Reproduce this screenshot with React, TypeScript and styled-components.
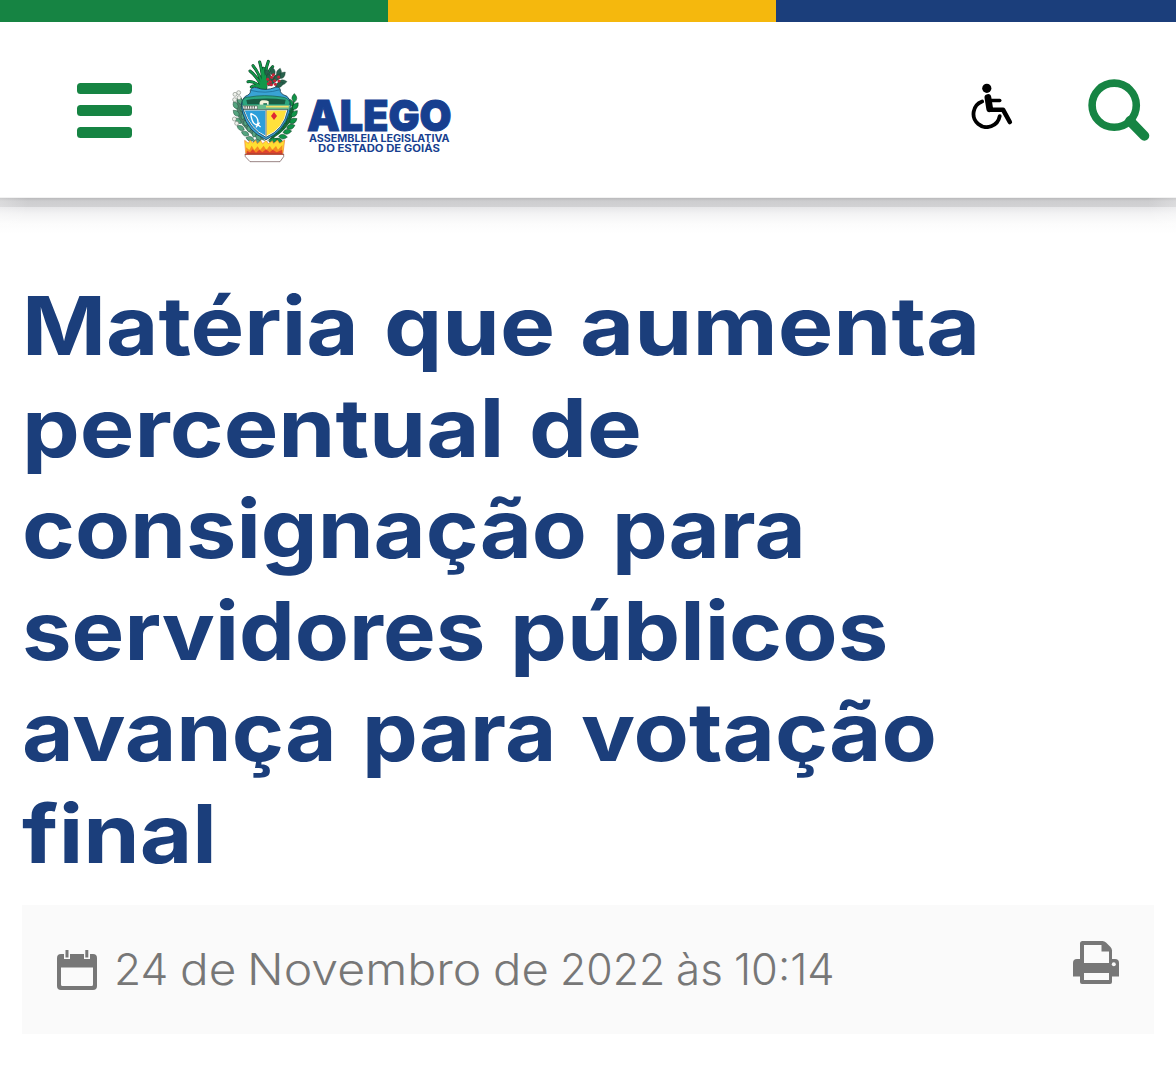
import React, { useLayoutEffect, useRef, useState } from "react";
import styled, { createGlobalStyle } from "styled-components";

const GlobalStyle = createGlobalStyle`
  * { box-sizing: border-box; }
  html, body { margin: 0; background: #fff; }
  body { font-family: Inter, "Liberation Sans", sans-serif; min-height: 1078px; overflow: hidden; }
`;

const Page = styled.div`
  width: 1176px;
  height: 1078px;
  background: #fff;
  overflow: hidden;
`;
const FlagStrip = styled.div`
  display: grid;
  grid-template-columns: 388px 388px 1fr;
  height: 22px;
`;
const FlagBand = styled.span<{ $color: string }>`
  background: ${(p) => p.$color};
`;
const Header = styled.header`
  display: flex;
  align-items: flex-start;
  height: 176px;
  padding: 34px 26px 0 77px;
  background: #fff;
  border-bottom: 1px solid #f2f2f2;
`;
const HeaderShadow = styled.div`
  height: 46px;
  background:
    linear-gradient(90deg, rgba(255, 255, 255, 0.25), rgba(255, 255, 255, 0) 28px calc(100% - 28px), rgba(255, 255, 255, 0.25)),
    linear-gradient(#b9b9bb 0, #cdcdcf 3px, #d2d2d4 9px, #e6e6e8 9px, #f3f3f4 16px, #fcfcfc 26px, #fff 36px);
`;
const IconButton = styled.button<{ $top: number; $left?: number }>`
  display: block;
  border: 0;
  padding: 0;
  background: none;
  margin: ${(p) => p.$top}px 0 0 ${(p) => p.$left ?? 0}px;
  svg { display: block; }
`;
const MenuBars = styled.span`
  display: grid;
  gap: 11px;
  width: 55px;
`;
const MenuBar = styled.span`
  height: 11px;
  border-radius: 3.5px;
  background: #168443;
`;
const Brand = styled.a`
  display: flex;
  margin-left: 88px;
  color: #173f8f;
  svg { display: block; flex: none; }
`;
const BrandText = styled.div`
  padding-top: 41px;
  margin-left: -3px;
`;
const BrandName = styled.div`
  font-size: 43px;
  line-height: 37px;
  font-weight: 900;
  height: 37px;
  -webkit-text-stroke: 1px #173f8f;
`;
const BrandLine = styled.div<{ $indent: number }>`
  font-size: 9.8px;
  font-weight: 700;
  line-height: 10px;
  height: 10px;
  padding-left: ${(p) => p.$indent}px;
`;
const Spacer = styled.span`
  flex: 1;
`;
const Article = styled.main`
  padding: 31px 22px 0;
`;
const Title = styled.h1`
  margin: 0;
  font-size: 81.5px;
  font-weight: 700;
  line-height: 101.5px;
  color: #1b3e7b;
`;
const TitleLine = styled.span`
  display: flex;
  gap: 25px;
  height: 101.5px;
`;
const Meta = styled.div`
  display: flex;
  height: 129px;
  margin-top: 21px;
  padding: 0 35px;
  background: #fafafa;
  color: #777;
`;
const DateText = styled.time`
  display: flex;
  gap: 11px;
  font-size: 43px;
  font-weight: 300;
  line-height: 52px;
  margin: 38px 0 0 17px;
`;
const WordBox = styled.span`
  display: block;
  flex: none;
  white-space: nowrap;
`;
const WordGlyphs = styled.span`
  display: inline-block;
  transform-origin: 0 50%;
`;

function Fitted({ width, children }: { width: number; children: string }) {
  const ref = useRef<HTMLSpanElement>(null);
  const [scale, setScale] = useState(1);
  useLayoutEffect(() => {
    if (ref.current) setScale(width / ref.current.offsetWidth);
  }, [width]);
  return (
    <WordBox style={{ width }}>
      <WordGlyphs ref={ref} style={{ transform: `scaleX(${scale})` }}>{children}</WordGlyphs>
    </WordBox>
  );
}

const WheelchairIcon = () => (
  <svg width="44" height="46" viewBox="970.5 83.3 44 46" fill="none" stroke="#000" strokeLinecap="round" strokeLinejoin="round">
    <circle cx="987.3" cy="88.6" r="4.6" fill="#000" stroke="none" />
    <path d="M982.6 101.8A13.2 13.2 0 1 0 1000.2 116.5" strokeWidth="3.8" />
    <path d="M988.4 97.8L990.2 109" strokeWidth="6.8" />
    <path d="M990 100.8L1000.3 100.8" strokeWidth="3.4" />
    <path d="M990.5 110L1003.5 110L1010.3 122.3" strokeWidth="4.6" />
  </svg>
);
const SearchIcon = () => (
  <svg width="63" height="63" viewBox="1087 78 63 63" fill="none" stroke="#168443">
    <circle cx="1114.2" cy="105.2" r="22.1" strokeWidth="7.6" />
    <path d="M1130 121L1144.4 135.8" strokeWidth="9.8" strokeLinecap="round" />
  </svg>
);
const CalendarIcon = () => (
  <svg width="40" height="41" viewBox="57 949 40 41">
    <path fill="#777" fillRule="evenodd" d="M61 954h32a4 4 0 0 1 4 4v28a4 4 0 0 1-4 4H61a4 4 0 0 1-4-4v-28a4 4 0 0 1 4-4zm0 13.5v17a1.5 1.5 0 0 0 1.5 1.5h29a1.5 1.5 0 0 0 1.5-1.5v-17z" />
    <path fill="#fafafa" d="M64 949h6v10h-6zM84 949h6v10h-6z" />
    <path fill="#777" d="M65.5 950h3v7.5h-3zM85.3 950h3v7.5h-3z" />
  </svg>
);
const PrintIcon = () => (
  <svg width="46" height="44" viewBox="1073 941 46 44">
    <path fill="#777" d="M1077 959h38a4 4 0 0 1 4 4v13.5h-46V963a4 4 0 0 1 4-4z" />
    <path fill="#777" d="M1083 941h19.5q2 0 3.5 1.500l4.500 4.500q1.500 1.500 1.500 3.500V982a2 2 0 0 1-2 2h-28a2 2 0 0 1-2-2v-38.500a2.500 2.500 0 0 1 2.500-2.500z" />
    <path fill="#fafafa" d="M1084 945h17.500v6.500h7.500V963h-25zM1084 973h25v7h-25z" />
    <circle cx="1113.8" cy="964.3" r="2" fill="#fafafa" />
  </svg>
);

const leaf = (x: number, y: number, a: number, s = 1) => (
  <path key={`${x}-${y}`} transform={`translate(${x} ${y}) rotate(${a}) scale(${s})`} d="M0 2Q-14 -9 0 -23Q14 -9 0 2Z" />
);

const Emblem = () => (
  <svg width="90" height="110" viewBox="0 18 270 330">
    <g fill="none" stroke="#123f25" strokeLinecap="round" strokeWidth="9">
      <path d="M131 118Q127 62 119 36M131 118Q120 72 99 47M131 118Q110 78 90 63M130 118Q105 92 84 95M135 116Q134 62 145 34M137 116Q140 65 158 50M133 118Q128 80 131 55M124 116Q108 102 94 111" />
    </g>
    <g fill="none" stroke="#12984a" strokeLinecap="round" strokeWidth="6">
      <path d="M131 118Q127 62 119 36M131 118Q120 72 99 47M131 118Q110 78 90 63M130 118Q105 92 84 95M135 116Q134 62 145 34M137 116Q140 65 158 50M133 118Q128 80 131 55M124 116Q108 102 94 111" />
    </g>
    <g fill="#28614c" stroke="#143d2c">
      {[[150, 80, -35], [160, 76, -10], [174, 79, 15], [178, 84, 45], [176, 99, 80], [160, 98, 20], [146, 106, 40], [168, 110, 60], [150, 95, -15], [164, 90, 45]].map(([x, y, a]) => leaf(x, y, a, 1.1))}
    </g>
    <g fill="#c92236">
      {[[143, 88], [151, 95], [155, 82], [164, 92], [176, 81], [154, 104], [145, 101], [166, 103], [177, 93], [160, 74]].map(([x, y]) => <circle key={`${x}-${y}`} cx={x} cy={y} r="4.6" />)}
    </g>
    <path d="M52 142Q38 200 83 243Q105 264 137 274Q102 232 73 199Q64 170 66 143Z" fill="#51836c" />
    <g fill="#55a47f" stroke="#245540" strokeWidth="1.5">
      {[[63, 162, -20], [52, 175, -30], [64, 184, 20], [56, 197, -45], [67, 207, 20], [62, 219, -50], [75, 226, 20], [71, 239, -60], [86, 244, 10], [85, 255, -65], [101, 260, 15], [100, 269, -75], [121, 271, -35], [121, 276, -85]].map(([x, y, a]) => leaf(x, y, a))}
    </g>
    <g fill="#eef1eb" stroke="#687069" strokeWidth="1.5">
      <circle cx="56" cy="128" r="6" /><circle cx="45" cy="133" r="6" /><circle cx="57" cy="143" r="6" /><circle cx="44" cy="149" r="6" /><circle cx="43" cy="207" r="6" /><circle cx="50" cy="220" r="6" />
    </g>
    <path d="M222 149Q232 232 139 275Q194 230 207 190Z" fill="#176b37" />
    <g fill="#0f9447" stroke="#123e25" strokeWidth="1.5">
      {[[223, 155, 0], [217, 166, -35], [219, 177, 40], [211, 185, -40], [215, 199, 45], [207, 203, -40], [210, 218, 60], [198, 219, -45], [202, 234, 70], [188, 234, -45], [191, 247, 80], [173, 249, -45], [178, 259, 95], [160, 260, -40], [165, 269, 105], [149, 274, 75]].map(([x, y, a]) => leaf(x, y, a, 1.05))}
    </g>
    <path d="M91 121Q96 110 110 113Q137 124 166 112Q178 109 181 119Q178 131 201 139Q217 155 208 188Q192 244 138 269Q83 245 68 190Q58 153 76 139Q94 132 91 121Z" fill="#39a3d5" stroke="#173b4c" strokeWidth="2.5" />
    <path d="M92 121Q136 133 180 119" fill="none" stroke="#17628b" strokeWidth="2" />
    <path d="M67 153Q72 140 89 141Q130 133 185 141Q205 143 209 157L207 178H70Z" fill="#2ca780" stroke="#185b43" strokeWidth="2" />
    <path d="M79 150Q136 141 197 149L194 163H82Z" fill="#195c43" />
    <path d="M119 164Q117 153 126 151Q139 149 146 154V164H141V160H130V164Z" fill="#f5f4dc" />
    <path d="M67 165H210L207 180H72Z" fill="#66bb8e" />
    <path d="M68 168H112V177H70Z" fill="#fff" stroke="#303e32" strokeWidth="1.5" />
    <path d="M75 168V176M82 168V176M89 168V176M96 168V176M103 168V176" stroke="#303e32" strokeWidth="2.5" />
    <path d="M138 170H206" stroke="#f2df68" strokeWidth="5" />
    <path d="M72 180H138V259Q91 239 72 180Z" fill="#2c9ed9" stroke="#fff" strokeWidth="3" />
    <path d="M138 180H201Q190 239 138 259Z" fill="#ffe13c" stroke="#fff" strokeWidth="3" />
    <path d="M138 180V259M70 179H204Q191 240 138 262Q89 240 70 179Z" fill="none" stroke="#263a40" strokeWidth="2" />
    <path d="M92 190Q115 199 114 218Q112 230 101 219Q94 209 92 190M110 221L122 231M108 232L119 218" fill="none" stroke="#fff" strokeWidth="4" />
    <path d="M162 186L171 198L162 210L153 198Z" fill="#df2633" />
    <path d="M77 309L74 271L85 280L90 270L98 279L107 271L112 281L122 272L128 281L138 272L145 281L157 272L161 281L172 270L179 280L194 270L189 309Z" fill="#ffdf32" stroke="#ef7a2f" strokeWidth="2" />
    <path d="M80 312L78 292L88 300L95 287L103 300L113 289L120 300L131 287L139 300L149 287L157 299L168 288L174 299L187 285L187 312Z" fill="#f58c22" />
    <path d="M80 312V302L90 307L98 298L108 308L118 299L127 307L138 298L149 307L158 299L170 307L187 299V312Z" fill="#df432c" />
    <path d="M75 312H191V320L180 335H90L76 320Z" fill="#fff" stroke="#674747" strokeWidth="2" />
    <path d="M75 313H191" stroke="#b8402b" strokeWidth="3" />
  </svg>
);

const titleLines: [string, number][][] = [
  [["Matéria", 336.5], ["que", 171.5], ["aumenta", 400]],
  [["percentual", 482], ["de", 113]],
  [["consignação", 565], ["para", 194]],
  [["servidores", 463], ["públicos", 378]],
  [["avança", 314.5], ["para", 194.5], ["votação", 356]],
  [["final", 194.5]],
];

const dateWords: [string, number][] = [
  ["24", 54.5],
  ["de", 56.5],
  ["Novembro", 234.5],
  ["de", 56],
  ["2022", 105.5],
  ["às", 47],
  ["10:14", 101],
];

const words = (list: [string, number][]) =>
  list.map(([text, width], i) => (
    <React.Fragment key={i}>
      {i > 0 && " "}
      <Fitted width={width}>{text}</Fitted>
    </React.Fragment>
  ));

export default function App() {
  return (
    <Page>
      <GlobalStyle />
      <FlagStrip>
        <FlagBand $color="#168443" />
        <FlagBand $color="#f5b80d" />
        <FlagBand $color="#1b3e7b" />
      </FlagStrip>
      <Header>
        <IconButton $top={26.5} aria-label="Menu">
          <MenuBars><MenuBar /><MenuBar /><MenuBar /></MenuBars>
        </IconButton>
        <Brand>
          <Emblem />
          <BrandText>
            <BrandName><Fitted width={145}>ALEGO</Fitted></BrandName>
            <BrandLine $indent={2}><Fitted width={141}>ASSEMBLEIA LEGISLATIVA</Fitted></BrandLine>
            <BrandLine $indent={11}><Fitted width={122}>DO ESTADO DE GOIÁS</Fitted></BrandLine>
          </BrandText>
        </Brand>
        <Spacer />
        <IconButton $top={27} aria-label="Acessibilidade"><WheelchairIcon /></IconButton>
        <IconButton $top={22} $left={73} aria-label="Buscar"><SearchIcon /></IconButton>
      </Header>
      <HeaderShadow />
      <Article>
        <Title>
          {titleLines.map((line, i) => (
            <TitleLine key={i}>{words(line)}</TitleLine>
          ))}
        </Title>
        <Meta>
          <IconButton as="span" $top={44}><CalendarIcon /></IconButton>
          <DateText>{words(dateWords)}</DateText>
          <Spacer />
          <IconButton as="span" $top={36}><PrintIcon /></IconButton>
        </Meta>
      </Article>
    </Page>
  );
}
